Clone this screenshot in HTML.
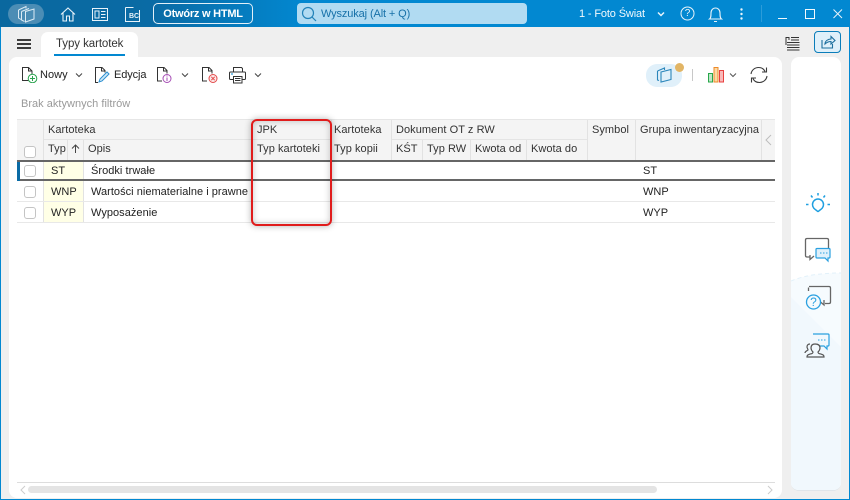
<!DOCTYPE html>
<html lang="pl"><head><meta charset="utf-8"><title>Typy kartotek</title>
<style>
html,body{margin:0;padding:0}
body{width:850px;height:500px;overflow:hidden;position:relative;background:#efefef;font-family:"Liberation Sans",sans-serif;font-size:11px;color:#222}
.a,.t,svg{position:absolute}
.t{white-space:nowrap;line-height:14px;letter-spacing:.04px}
.h{color:#333;letter-spacing:.05px}
.v{position:absolute;width:1px;background:#e2e2e2}
.l{position:absolute;height:1px}
.cb{position:absolute;left:24px;width:10px;height:10px;border:1px solid #c4c4c4;border-radius:3px;background:#fff}
</style></head><body>
<div class="a" style="left:0;top:0;width:850px;height:27px;background:linear-gradient(90deg,#0a689f 0,#0a6ba5 18%,#0288d1 36%,#0288d1 100%)"></div>
<div class="a" style="left:0;top:27px;width:1px;height:473px;background:#0288d1"></div>
<div class="a" style="left:849px;top:27px;width:1px;height:473px;background:#0288d1"></div>
<div class="a" style="left:0;top:499px;width:850px;height:1px;background:#0288d1"></div>
<div class="a" style="left:8px;top:4px;width:36px;height:20px;border-radius:10px;background:#4b8db5"></div>
<svg style="left:17px;top:5px" width="19" height="18" viewBox="0 0 19 18" fill="none" stroke="#dcecf5" stroke-width="1"><path d="M8.500 6.500L17 4v10l-8.500 3z"/><path d="M1.500 5L9 1.500v2M1.500 5v8l2.500 1.500M4.500 6.500L12 3.500M4.500 6.500v8.500l3 1.500"/></svg>
<svg style="left:60px;top:5px" width="17" height="18" viewBox="0 0 17 18" fill="none" stroke="#e8f3fa" stroke-width="1.100"><path d="M1 9.500L8 3l7 6.500M3 8v8h3.500v-5h3v5H13V8"/></svg>
<svg style="left:92px;top:8px" width="16" height="14" viewBox="0 0 16 14" fill="none" stroke="#e8f3fa"><rect x=".5" y=".5" width="15" height="12"/><rect x="3" y="3" width="4" height="7"/><path d="M9 3.500h4.500M9 6.500h4.500M9 9.500h4.500"/></svg>
<svg style="left:125px;top:7px" width="15" height="15" viewBox="0 0 15 15" fill="none" stroke="#e8f3fa"><path d="M.5 .5h8M.5 .5v14h14V3"/></svg>
<div class="t" style="left:129px;top:12px;font-size:7px;line-height:9px;font-weight:bold;color:#e8f3fa;letter-spacing:0">BC</div>
<div class="a" style="left:153px;top:3px;width:98px;height:19px;border:1px solid #e3f0f8;border-radius:5px"></div>
<div class="t" style="left:153px;top:7px;width:100px;text-align:center;color:#fff;font-weight:bold;font-size:11px;letter-spacing:-.23px">Otwórz w HTML</div>
<div class="a" style="left:297px;top:3px;width:230px;height:21px;border-radius:4px;background:#b1dbf2"></div>
<svg style="left:301px;top:6px" width="16" height="16" viewBox="0 0 16 16" fill="none" stroke="#2282b8" stroke-width="1.200"><circle cx="7" cy="7" r="5.500"/><path d="M11 11l4 4"/></svg>
<div class="t" style="left:321px;top:7px;color:#1670a8;font-size:11px;letter-spacing:-.12px">Wyszukaj (Alt + Q)</div>
<div class="t" style="left:579px;top:7px;color:#f2f9fd;font-size:11px;letter-spacing:-.14px">1 - Foto Świat</div>
<svg style="left:656px;top:11px" width="10" height="7" viewBox="0 0 10 7" fill="none" stroke="#e8f3fa" stroke-width="1.500"><path d="M2 1.500L5 4.500l3-3"/></svg>
<svg style="left:680px;top:6px" width="15" height="15" viewBox="0 0 15 15" fill="none" stroke="#e8f3fa"><circle cx="7.500" cy="7.500" r="6.500"/></svg>
<div class="t" style="left:680px;top:7px;width:15px;text-align:center;color:#e8f3fa;font-size:10px;letter-spacing:0">?</div>
<svg style="left:708px;top:6px" width="15" height="17" viewBox="0 0 15 17" fill="none" stroke="#e8f3fa" stroke-width="1.100"><path d="M1.500 13c1.500-1 1.500-3 1.500-6 0-3 2-5 4.500-5s4.500 2 4.500 5c0 3 0 5 1.500 6zM6 15.500h3"/></svg>
<svg style="left:740px;top:8px" width="3" height="12"><circle cx="1.500" cy="1.500" r="1.200" fill="#e8f3fa"/><circle cx="1.500" cy="6" r="1.200" fill="#e8f3fa"/><circle cx="1.500" cy="10.500" r="1.200" fill="#e8f3fa"/></svg>
<div class="a" style="left:761px;top:5px;width:1px;height:17px;background:#2c9cd9"></div>
<div class="a" style="left:778px;top:18px;width:9px;height:1px;background:#f2f9fd"></div>
<div class="a" style="left:805px;top:9px;width:8px;height:8px;border:1px solid #f2f9fd"></div>
<svg style="left:833px;top:9px" width="10" height="10" stroke="#e8f3fa"><path d="M.5 .5l8.500 8.500M9 .5L.5 9"/></svg>

<div class="a" style="left:17px;top:39px;width:14px;height:2px;background:#3c3c3c"></div>
<div class="a" style="left:17px;top:43px;width:14px;height:2px;background:#3c3c3c"></div>
<div class="a" style="left:17px;top:47px;width:14px;height:2px;background:#3c3c3c"></div>
<div class="a" style="left:41px;top:32px;width:97px;height:26px;background:#fff;border-radius:7px 7px 0 0"></div>
<div class="t" style="left:56px;top:36px;font-size:11.500px;color:#333;letter-spacing:-.08px;line-height:15px;padding-top:1px">Typy kartotek</div>
<div class="a" style="left:54px;top:54px;width:71px;height:2px;background:#0288d1"></div>

<div class="a" style="left:9px;top:57px;width:773px;height:441px;background:#fff;border-radius:8px"></div>
<div class="a" style="left:791px;top:57px;width:50px;height:434px;border-radius:8px;background:#fff;border-bottom:1px solid #dfe5ea;box-sizing:border-box;overflow:hidden"><svg style="left:0;top:0" width="50" height="434" fill="none"><path d="M0 224C14 218 32 216 50 216V434H0z" fill="#f6fbfe"/><path d="M0 224C14 218 32 216 50 216" stroke="#e2f1fa" stroke-dasharray="4 3"/><path d="M0 240L50 290V434H0z" fill="#f1f8fd"/></svg></div>

<svg style="left:785px;top:37px" width="15" height="14" fill="none" stroke="#333"><path d="M.5 .5h3.500v2.500M6 .5h8M6 3h8M2 5.500h12.500M2 8h12.500M2 10.500h12.500M2 13h12.500M1 .5V8"/></svg>
<div class="a" style="left:814px;top:31px;width:25px;height:20px;border:1px solid #0a7dba;border-radius:4px;background:#dff0fa"></div>
<svg style="left:821px;top:35px" width="15" height="14" fill="none" stroke="#1d6f9e" stroke-width="1.100"><path d="M1 5v8h10.500V9M4 9c0-3 3-5 6-5V1.500l4 4-4 3.500V6.500c-2.500 0-4.500 1-6 2.500z"/></svg>

<svg style="left:21px;top:67px" width="17" height="16" fill="none"><path d="M8 13.500H1.500V.5h6l3.500 3.500v3M7.500 .5v3.500h3.500" stroke="#333"/><circle cx="11.500" cy="11.500" r="4.300" stroke="#2aa24e" fill="#fff"/><path d="M11.500 9v5M9 11.500h5" stroke="#2aa24e"/></svg>
<div class="t" style="left:40px;top:68px;font-size:11px;color:#222">Nowy</div>
<svg style="left:75px;top:73px" width="8" height="5" fill="none" stroke="#444"><path d="M1 .5l3 3 3-3"/></svg>
<svg style="left:94px;top:67px" width="18" height="17" fill="none"><path d="M4 15.500H1.500V.5h6.500l3 3v2M7.500 .5v3.500H11" stroke="#333"/><path d="M5 15l1-3 7-7 2 2-7 7z" stroke="#2a8ed0" fill="#cfe7f7"/></svg>
<div class="t" style="left:114px;top:68px;color:#222;letter-spacing:-.1px">Edycja</div>
<svg style="left:156px;top:67px" width="18" height="17" fill="none"><path d="M6 14H1.500V.5h6.500l3 3v3M7.500 .5v3.500H11" stroke="#333"/><circle cx="11" cy="11.500" r="4" stroke="#a64db5"/><path d="M11 10.500v3.500M11 8.500v1" stroke="#a64db5"/></svg>
<svg style="left:181px;top:73px" width="8" height="5" fill="none" stroke="#444"><path d="M1 .5l3 3 3-3"/></svg>
<svg style="left:201px;top:67px" width="18" height="17" fill="none"><path d="M6 14H1.500V.5h6.500l3 3v3M7.500 .5v3.500H11" stroke="#333"/><circle cx="12" cy="11.500" r="4" stroke="#e24b4b" fill="#fde9e9"/><path d="M10.300 9.800l3.400 3.400M13.700 9.800l-3.400 3.400" stroke="#e24b4b"/></svg>
<svg style="left:229px;top:67px" width="18" height="17" fill="none" stroke="#333"><path d="M4.500 5V.5h8l1 1V5M4 12.500H1.500c-.5 0-1-.5-1-1V6c0-.5.5-1 1-1h14c.5 0 1 .5 1 1v5.500c0 .5-.5 1-1 1H13"/><rect x="4.500" y="9.500" width="8.500" height="6.500"/><path d="M6 11.500h5.500M6 13.500h5.500"/><path d="M2 7h2" stroke="#0288d1"/></svg>
<svg style="left:254px;top:73px" width="8" height="5" fill="none" stroke="#444"><path d="M1 .5l3 3 3-3"/></svg>

<div class="a" style="left:646px;top:64px;width:36px;height:23px;border-radius:11px;background:#e0f0fa"></div>
<svg style="left:656px;top:67px" width="17" height="16" fill="none" stroke="#2b86bb" stroke-width="1.100"><path d="M1.500 4v9l1.500 .5M1.500 4l7-3v2"/><path d="M5 5l10-2.500v10L5 15z"/></svg>
<div class="a" style="left:675px;top:63px;width:9px;height:9px;border-radius:50%;background:#e2b565"></div>
<div class="a" style="left:692px;top:69px;width:1px;height:12px;background:#c8c8c8"></div>
<svg style="left:708px;top:66px" width="17" height="17"><rect x=".5" y="7.500" width="4" height="8.500" fill="#bfe5c8" stroke="#28a84a"/><rect x="6" y="1.500" width="4" height="14.500" fill="#fbd9a5" stroke="#ee8a28"/><rect x="11.500" y="4.500" width="4" height="11.500" fill="#f9b9b9" stroke="#e8403f"/></svg>
<svg style="left:729px;top:73px" width="8" height="5" fill="none" stroke="#555"><path d="M1 .5l3 3 3-3"/></svg>
<svg style="left:750px;top:66px" width="18" height="18" fill="none" stroke="#3a3a3a" stroke-width="1.100"><path d="M1 8C1.500 4 5 1.500 8.500 1.500c3 0 5.500 1.500 6.500 4M16.500 1.500v4.500H12M17 10c-.5 4-4 6.500-7.500 6.500-3 0-5.500-1.500-6.500-4M1.500 16.500V12H6"/></svg>

<div class="t" style="left:21px;top:97px;color:#999;font-size:11px;letter-spacing:.02px">Brak aktywnych filtrów</div>

<div class="a" style="left:17px;top:119px;width:758px;height:41px;background:#f4f4f4;border-top:1px solid #e6e6e6;box-sizing:border-box"></div>
<div class="l" style="left:43px;top:139px;width:288px;background:#e4e4e4"></div>
<div class="l" style="left:391px;top:139px;width:196px;background:#e4e4e4"></div>
<div class="v" style="left:43px;top:120px;height:102px"></div>
<div class="v" style="left:67px;top:140px;height:20px"></div>
<div class="v" style="left:83px;top:140px;height:82px"></div>
<div class="v" style="left:331px;top:120px;height:40px"></div>
<div class="v" style="left:391px;top:120px;height:40px"></div>
<div class="v" style="left:422px;top:140px;height:20px"></div>
<div class="v" style="left:470px;top:140px;height:20px"></div>
<div class="v" style="left:526px;top:140px;height:20px"></div>
<div class="v" style="left:587px;top:120px;height:40px"></div>
<div class="v" style="left:635px;top:120px;height:40px"></div>
<div class="v" style="left:761px;top:120px;height:40px"></div>
<div class="a" style="left:44px;top:161px;width:39px;height:61px;background:#ffffe6"></div>
<div class="a" style="left:17px;top:160px;width:758px;height:2px;background:#666"></div>
<div class="a" style="left:17px;top:179px;width:758px;height:2px;background:#666"></div>
<div class="a" style="left:17px;top:162px;width:3px;height:19px;background:#0a6ba5"></div>
<div class="l" style="left:17px;top:201px;width:758px;background:#e8e8e8"></div>
<div class="l" style="left:17px;top:222px;width:758px;background:#e8e8e8"></div>

<div class="cb" style="top:146px"></div>
<div class="cb" style="top:165px"></div>
<div class="cb" style="top:186px"></div>
<div class="cb" style="top:207px"></div>

<div class="t h" style="left:48px;top:123px">Kartoteka</div>
<div class="t h" style="left:257px;top:123px">JPK</div>
<div class="t h" style="left:334px;top:123px">Kartoteka</div>
<div class="t h" style="left:396px;top:123px">Dokument OT z RW</div>
<div class="t h" style="left:592px;top:123px">Symbol</div>
<div class="t h" style="left:640px;top:123px">Grupa inwentaryzacyjna</div>
<div class="t h" style="left:48px;top:142px">Typ</div>
<svg style="left:71px;top:144px" width="9" height="9" fill="none" stroke="#444"><path d="M4.500 9V1M1 4.500L4.500 1 8 4.500"/></svg>
<div class="t h" style="left:88px;top:142px">Opis</div>
<div class="t h" style="left:257px;top:142px">Typ kartoteki</div>
<div class="t h" style="left:334px;top:142px">Typ kopii</div>
<div class="t h" style="left:396px;top:142px">KŚT</div>
<div class="t h" style="left:427px;top:142px">Typ RW</div>
<div class="t h" style="left:475px;top:142px">Kwota od</div>
<div class="t h" style="left:531px;top:142px">Kwota do</div>
<svg style="left:765px;top:134px" width="7" height="12" fill="none" stroke="#bdbdbd"><path d="M6 1L1 6l5 5"/></svg>

<div class="t" style="left:51px;top:164px">ST</div>
<div class="t" style="left:91px;top:164px">Środki trwałe</div>
<div class="t" style="left:643px;top:164px">ST</div>
<div class="t" style="left:51px;top:185px">WNP</div>
<div class="t" style="left:91px;top:185px;letter-spacing:.03px">Wartości niematerialne i prawne</div>
<div class="t" style="left:643px;top:185px">WNP</div>
<div class="t" style="left:51px;top:206px">WYP</div>
<div class="t" style="left:91px;top:206px">Wyposażenie</div>
<div class="t" style="left:643px;top:206px">WYP</div>

<div class="a" style="left:251px;top:119px;width:77px;height:103px;border:2px solid #e01c1c;border-radius:6px;box-shadow:0 0 7px rgba(0,0,0,.3),inset 0 0 7px rgba(0,0,0,.22)"></div>

<div class="a" style="left:17px;top:482px;width:758px;height:1px;background:#ddd"></div>
<div class="a" style="left:28px;top:486px;width:629px;height:7px;border-radius:4px;background:#e4e4e4"></div>
<svg style="left:20px;top:485px" width="6" height="10" fill="none" stroke="#ccc"><path d="M5 1L1 5l4 4"/></svg>
<svg style="left:767px;top:485px" width="6" height="10" fill="none" stroke="#ccc"><path d="M1 1l4 4-4 4"/></svg>

<svg style="left:805px;top:192px" width="26" height="24" fill="none" stroke="#1f9fe0" stroke-width="1.500"><path d="M13 20c-.5-2-5.500-2.500-5.500-7.500a5.500 5.500 0 0 1 11 0c0 5-5 5.500-5.500 7.500z"/><path d="M13 1v2.500M6 3.500l1.500 2M20 3.500l-1.500 2M1 12.500h2.500M22.500 12.500H25"/></svg>
<svg style="left:804px;top:237px" width="27" height="26" fill="none"><path d="M6 20H3c-1 0-1.500-.5-1.500-1.500V3c0-1 .5-1.500 1.500-1.500h20c1 0 1.500 .5 1.500 1.500v8M6 18v4.500L10 19" stroke="#666" stroke-width="1.300"/><path d="M13 11.500h12c.5 0 1 .5 1 1V20c0 .5-.5 1-1 1h-1v3l-3-3h-8c-.5 0-1-.5-1-1v-7.500c0-.5.5-1 1-1z" fill="#dff0fb" stroke="#2aa0e0" stroke-width="1.200"/><path d="M16 16h1.500M19 16h1.500M22 16h1.500" stroke="#2aa0e0"/></svg>
<svg style="left:805px;top:285px" width="27" height="26" fill="none"><path d="M4 1.500H24c1 0 1.500 .5 1.500 1.500V17c0 1-.5 1.500-1.500 1.500h-4M19 15v5l-3.500-3M3.500 6V2.500" stroke="#666" stroke-width="1.300"/><circle cx="8.500" cy="17" r="7" stroke="#2aa0e0" stroke-width="1.300" fill="#f4fafd"/></svg>
<div class="t" style="left:806px;top:295px;width:15px;text-align:center;color:#2aa0e0;font-size:12px;letter-spacing:0">?</div>
<svg style="left:804px;top:332px" width="27" height="26" fill="none"><path d="M9 2h15c.5 0 1 .5 1 1v10c0 .5-.5 1-1 1h-1v3l-3-3h-5" stroke="#2aa0e0" stroke-width="1.200"/><path d="M14 8h1.500M17 8h1.500M20 8h1.500" stroke="#2aa0e0"/><path d="M11 12c-3 0-4 2-4 4 0 2 1 3 2 4 0 1-1 2-3 2-2 1-3 1-3 3h17c0-2-1-2-3-3-2 0-3-1-3-2 1-1 2-2 2-4s-1-4-5-4zM6 12c-2 0-3 1-3 3 0 1 1 2 1 3-1 1-3 1-3 3" stroke="#555" stroke-width="1.200"/></svg>
</body></html>
